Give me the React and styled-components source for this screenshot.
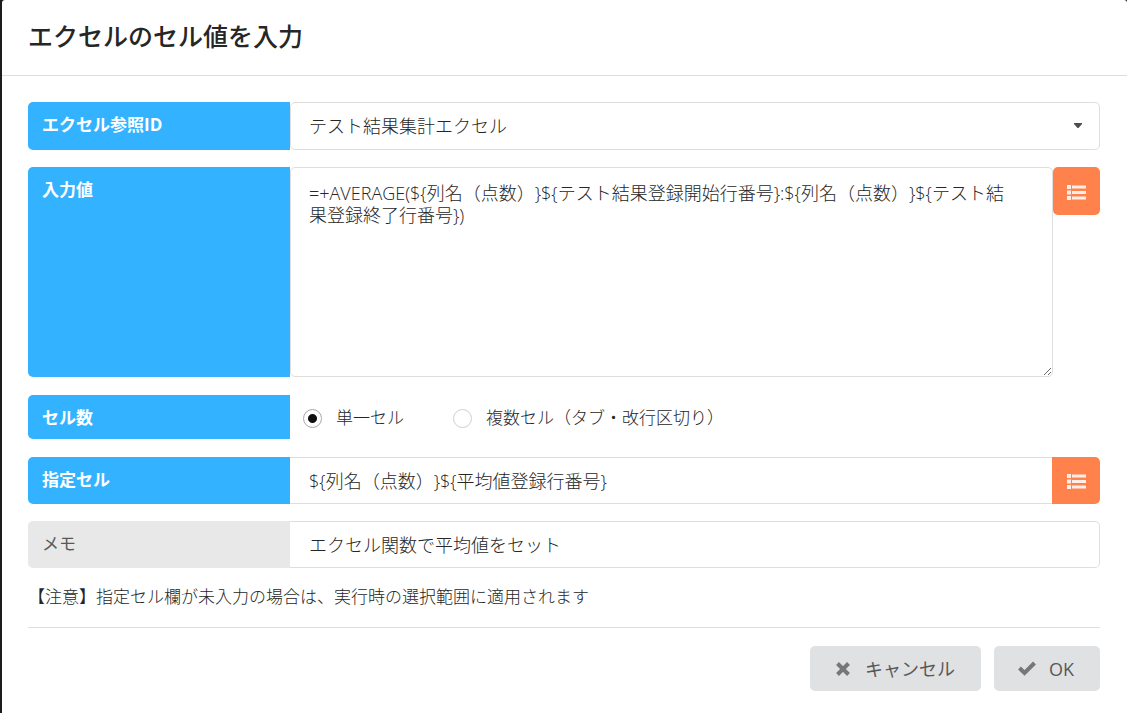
import { useState } from "react"
import styled, { createGlobalStyle } from "styled-components"

export default function App(){

  const [ count, setCount ] = useState("single")

  return(
    <>
      <GlobalStyle/>
      <Modal>
        <Header>
          <Title>エクセルのセル値を入力</Title>
        </Header>
        <Form onSubmit={e => e.preventDefault()}>
          <Row>
            <Label htmlFor="excel">エクセル参照ID</Label>
            <SelectBox>
              <Select id="excel">
                <option>テスト結果集計エクセル</option>
              </Select>
              <Caret viewBox="0 0 10 5" aria-hidden="true">
                <path d="M1 0h8v1L5.5 5h-1L1 1z"/>
              </Caret>
            </SelectBox>
          </Row>
          <Row $height="210px" $gap="18px">
            <Label htmlFor="value">入力値</Label>
            <TextArea
              id="value"
              spellCheck="false"
              defaultValue="=+AVERAGE(${列名（点数）}${テスト結果登録開始行番号}:${列名（点数）}${テスト結果登録終了行番号})"
            />
            <ListButton type="button" aria-label="変数一覧" $separate>
              <ListIcon/>
            </ListButton>
          </Row>
          <Row $height="44px" $gap="18px">
            <Label as="div" id="count">セル数</Label>
            <Options role="radiogroup" aria-labelledby="count">
              <Option>
                <Radio name="count" checked={count === "single"} onChange={() => setCount("single")}/>
                単一セル
              </Option>
              <Option>
                <Radio name="count" checked={count === "multi"} onChange={() => setCount("multi")}/>
                複数セル（タブ・改行区切り）
              </Option>
            </Options>
          </Row>
          <Row $height="47px">
            <Label htmlFor="cell">指定セル</Label>
            <Input id="cell" defaultValue="${列名（点数）}${平均値登録行番号}" $joined/>
            <ListButton type="button" aria-label="変数一覧">
              <ListIcon/>
            </ListButton>
          </Row>
          <Row $height="47px">
            <Label htmlFor="memo" $muted>メモ</Label>
            <Input id="memo" defaultValue="エクセル関数で平均値をセット"/>
          </Row>
          <Notice>【注意】指定セル欄が未入力の場合は、実行時の選択範囲に適用されます</Notice>
          <Actions>
            <Button type="button">
              <Icon viewBox="0 0 18 18" aria-hidden="true">
                <path d="M3.5 3.5l11 11M14.5 3.5l-11 11"/>
              </Icon>
              キャンセル
            </Button>
            <Button type="submit">
              <Icon viewBox="0 0 18 18" aria-hidden="true">
                <path d="M1.5 8l5 5L16.5 3"/>
              </Icon>
              OK
            </Button>
          </Actions>
        </Form>
      </Modal>
    </>
  )
}

function ListIcon(){
  return(
    <ListSvg viewBox="0 0 19 15" aria-hidden="true">
      <path d="M0 0h4v4H0zM0 5.5h4v4H0zM0 11h4v4H0zM5 .5h14v3H5zM5 6h14v3H5zM5 11.5h14v3H5z"/>
    </ListSvg>
  )
}

const GlobalStyle = createGlobalStyle`
  * {
    box-sizing: border-box;
  }

  body {
    margin: 0;
    background: #1b1c1d;
    color: #262626;
    font-family: "Open Sans", "Noto Sans CJK JP", sans-serif;
    font-size: 17px;
    font-weight: 300;
    line-height: 22px;
    text-spacing-trim: space-all;
  }

  button, input, select, textarea {
    font: inherit;
    color: inherit;
    text-spacing-trim: inherit;
  }
`

const Modal = styled.main`
  margin-left: 2px;
  min-height: 100vh;
  background: #fff;
  border-radius: 3px 3px 0 0;
`

const Header = styled.header`
  padding: 19px 26px 21px;
  border-bottom: 1px solid #dedede;
`

const Title = styled.h1`
  margin: 0;
  font-size: 25px;
  font-weight: 500;
  line-height: 35px;
`

const Form = styled.form`
  padding: 26px 27px 22px 26px;
`

const Row = styled.div`
  display: flex;
  align-items: flex-start;
  height: ${({$height}) => $height || "48px"};
  margin-bottom: ${({$gap}) => $gap || "17px"};
`

const Label = styled.label`
  flex: 0 0 262px;
  align-self: stretch;
  padding: 12px 14px;
  border-radius: 5px 0 0 5px;
  background: ${({$muted}) => $muted ? "#e8e8e8" : "#33b3ff"};
  color: ${({$muted}) => $muted ? "#595959" : "#fff"};
  font-weight: ${({$muted}) => $muted ? 400 : 700};
`

const SelectBox = styled.div`
  flex: 1;
  align-self: stretch;
  position: relative;
`

const Select = styled.select`
  appearance: none;
  width: 100%;
  height: 100%;
  padding: 0 40px 0 18px;
  border: 1px solid #dededf;
  border-radius: 5px;
  background: #fff;
  font-size: 18px;
`

const Caret = styled.svg`
  position: absolute;
  top: 21px;
  right: 17px;
  width: 10px;
  height: 5px;
  fill: #4d4d4d;
  pointer-events: none;
`

const TextArea = styled.textarea`
  flex: 1;
  align-self: stretch;
  padding: 14px 36px 14px 18px;
  border: 1px solid #dededf;
  border-radius: 5px;
  background: #fff;
  font-size: 18px;
  resize: vertical;
`

const Input = styled.input`
  flex: 1;
  min-width: 0;
  align-self: stretch;
  padding: 0 19px;
  border: 1px solid #dededf;
  border-left: 0;
  border-right-width: ${({$joined}) => $joined ? "0" : "1px"};
  border-radius: ${({$joined}) => $joined ? "0" : "0 5px 5px 0"};
  background: #fff;
  font-size: 18px;
`

const ListButton = styled.button`
  display: flex;
  flex: 0 0 ${({$separate}) => $separate ? "47px" : "48px"};
  height: ${({$separate}) => $separate ? "48px" : "100%"};
  align-items: center;
  justify-content: center;
  padding: 2px 0 0;
  border: 0;
  border-radius: ${({$separate}) => $separate ? "5px" : "0 5px 5px 0"};
  background: #ff824d;
  cursor: pointer;
`

const ListSvg = styled.svg`
  width: 19px;
  height: 15px;
  fill: #ffefe8;
`

const Options = styled.div`
  display: flex;
  align-self: stretch;
  align-items: center;
  gap: 49px;
  padding: 2px 0 0 13px;
`

const Option = styled.label`
  display: flex;
  align-items: center;
  gap: 14px;
`

const Radio = styled.input.attrs({ type: "radio" })`
  appearance: none;
  width: 19px;
  height: 19px;
  margin: 0;
  border: 1px solid #d0d0d1;
  border-radius: 50%;
  background: #fff;

  &:checked {
    border-color: #a8a8a8;
    background: radial-gradient(circle, #111 4px, #fff 5px);
  }
`

const Notice = styled.p`
  margin: 0;
  padding: 1px 0 19px;
  border-bottom: 1px solid #dedede;
`

const Actions = styled.div`
  display: flex;
  justify-content: flex-end;
  gap: 13px;
  padding-top: 18px;
`

const Button = styled.button`
  display: flex;
  align-items: center;
  gap: 13px;
  height: 45px;
  padding: 0 26px 0 24px;
  border: 0;
  border-radius: 5px;
  background: #e0e1e2;
  color: #595959;
  font-size: 18px;
  font-weight: 400;
  cursor: pointer;
`

const Icon = styled.svg`
  width: 18px;
  height: 18px;
  fill: none;
  stroke: #777;
  stroke-width: 4;
`
